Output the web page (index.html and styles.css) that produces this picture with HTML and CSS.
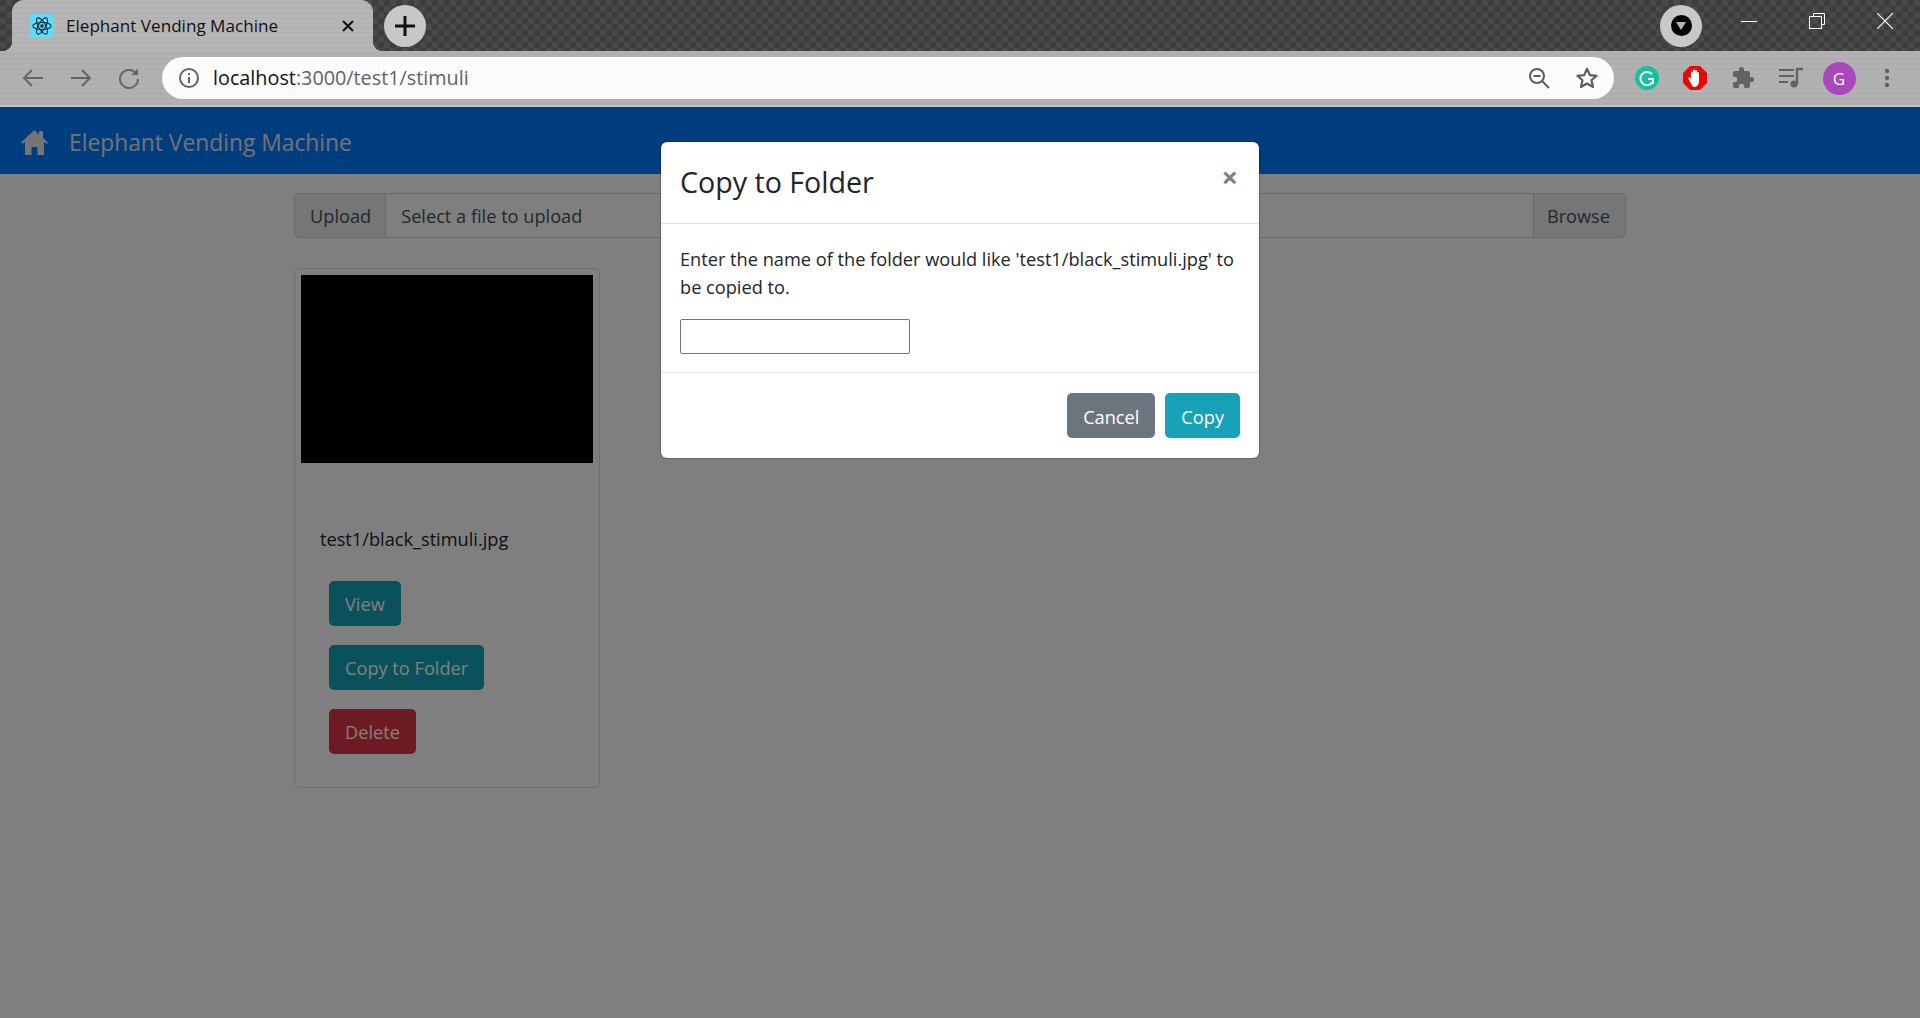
FILE: index.html
```html
<!DOCTYPE html>
<html lang="en">
<head>
<meta charset="UTF-8" />
<title>Elephant Vending Machine</title>
<link rel="stylesheet" href="styles.css">
</head>
<body>
<!-- Browser chrome -->
<div class="tabstrip">
  <div class="tab">
    <span class="favicon">
      <svg width="20" height="20" viewBox="0 0 24 24" fill="none" stroke="#10323f" stroke-width="1.3">
        <circle cx="12" cy="12" r="2.2" fill="#10323f" stroke="none"/>
        <ellipse cx="12" cy="12" rx="11" ry="4.3"/>
        <ellipse cx="12" cy="12" rx="11" ry="4.3" transform="rotate(60 12 12)"/>
        <ellipse cx="12" cy="12" rx="11" ry="4.3" transform="rotate(120 12 12)"/>
      </svg>
    </span>
    <span class="tab-title">Elephant Vending Machine</span>
    <svg class="tab-close" width="12" height="12" viewBox="0 0 12 12" stroke="#111" stroke-width="2"><path d="M1 1l10 10M11 1L1 11"/></svg>
  </div>
  <div class="newtab">
    <svg width="22" height="22" viewBox="0 0 22 22" stroke="#111" stroke-width="3"><path d="M11 1v20M1 11h20"/></svg>
  </div>
  <div class="strip-space"></div>
  <div class="newtab media-btn"><span class="media-dot"></span></div>
  <div class="winctl">
    <svg width="16" height="16" viewBox="0 0 16 16" stroke="#fff" stroke-width="1"><path d="M0 8.5h16"/></svg>
  </div>
  <div class="winctl">
    <svg width="16" height="16" viewBox="0 0 16 16" fill="none" stroke="#fff" stroke-width="1"><path d="M4.5 3V.5h11v11H13"/><rect x=".5" y="3.5" width="12" height="12"/></svg>
  </div>
  <div class="winctl">
    <svg width="16" height="16" viewBox="0 0 16 16" stroke="#fff" stroke-width="1.1"><path d="M0 0l16 16M16 0L0 16"/></svg>
  </div>
</div>

<div class="toolbar">
  <svg class="navicon" width="24" height="24" viewBox="0 0 24 24" fill="none" stroke="#62666b" stroke-width="2"><path d="M22 12H3M11 4l-8 8 8 8"/></svg>
  <svg class="navicon" width="24" height="24" viewBox="0 0 24 24" fill="none" stroke="#62666b" stroke-width="2"><path d="M2 12h19M13 4l8 8-8 8"/></svg>
  <svg class="navicon" width="24" height="24" viewBox="0 0 24 24" fill="none" stroke="#62666b" stroke-width="2"><path d="M19.5 8A9 9 0 1 0 21 13"/><path d="M21 2.5V9h-6.5z" fill="#62666b" stroke="none"/></svg>
  <div class="omnibox">
    <svg class="info-icon" width="22" height="22" viewBox="0 0 22 22" fill="none" stroke="#5f6368" stroke-width="2"><circle cx="11" cy="11" r="9"/><path d="M11 10v6M11 6v2"/></svg>
    <span class="url">localhost<span class="url-rest">:3000/test1/stimuli</span></span>
    <div class="omni-actions">
      <svg width="24" height="24" viewBox="0 0 24 24" fill="none" stroke="#5a5d60" stroke-width="2"><circle cx="10" cy="10" r="7"/><path d="M6.5 10h7M15 15l7 7"/></svg>
      <svg width="24" height="24" viewBox="0 0 24 24" fill="none" stroke="#5a5d60" stroke-width="2.2" stroke-linejoin="round"><path d="M12 2.8l2.8 6.3 6.8.7-5.1 4.5 1.5 6.7-6-3.5-6 3.5 1.5-6.7-5.1-4.5 6.8-.7z"/></svg>
    </div>
  </div>
  <div class="extensions">
    <svg width="24" height="24" viewBox="0 0 24 24" fill="none"><circle cx="12" cy="12" r="12" fill="#15c39a"/><path d="M17 8.2A6.6 6.6 0 1 0 17.6 16M13 13h5v5" stroke="#fff" stroke-width="2"/></svg>
    <svg width="24" height="24" viewBox="0 0 24 24"><path d="M7 0h10l7 7v10l-7 7H7l-7-7V7z" fill="#e80a0a"/><path d="M8 13V6.5a1 1 0 0 1 2 0V11V4.500a1 1 0 0 1 2 0V11V5a1 1 0 0 1 2 0v6V7a1 1 0 0 1 2 0v8c0 3-2 6-4.500 6S9 19 7.500 16.500L5.500 13c-.7-1.200 1-2 1.700-1z" fill="#fff"/></svg>
    <svg width="24" height="24" viewBox="0 0 24 24" fill="#5f6368"><path d="M20.500 11H19V7a2 2 0 0 0-2-2h-4V3.500a2.500 2.500 0 0 0-5 0V5H4a2 2 0 0 0-2 2v3.800h1.500a2.700 2.700 0 0 1 0 5.400H2V20a2 2 0 0 0 2 2h3.800v-1.500a2.700 2.700 0 0 1 5.400 0V22H17a2 2 0 0 0 2-2v-4h1.500a2.500 2.500 0 0 0 0-5z"/></svg>
    <svg width="24" height="24" viewBox="0 0 24 24" fill="none" stroke="#5f6368" stroke-width="2"><path d="M0 4h15M0 10h15M0 16h9"/><path d="M18 18V3h6" stroke-width="2.400"/><circle cx="15" cy="18" r="3.600" fill="#5f6368" stroke="none"/></svg>
    <span class="avatar">G</span>
    <svg width="24" height="24" viewBox="0 0 24 24" fill="#5f6368"><circle cx="12" cy="5" r="2.200"/><circle cx="12" cy="12" r="2.200"/><circle cx="12" cy="19" r="2.200"/></svg>
  </div>
</div>

<!-- App -->
<div class="app">
  <nav class="navbar">
    <svg class="home-icon" width="27" height="26" viewBox="0 0 27 26"><path d="M13.500 1L0 13.500l1.500 1.500L4 12.800V26h6.500v-8h6v8H23V12.800L25.500 15l1.500-1.500L22 9V2h-4v3.400z"/></svg>
    <span class="navbar-brand">Elephant Vending Machine</span>
  </nav>

  <main class="content">
    <div class="file-input">
      <span class="addon addon-left">Upload</span>
      <span class="file-label">Select a file to upload</span>
      <span class="addon addon-right">Browse</span>
    </div>

    <div class="card">
      <div class="card-img"></div>
      <p class="card-name">test1/black_stimuli.jpg</p>
      <div class="card-actions">
        <button class="btn btn-info">View</button>
        <button class="btn btn-info">Copy to Folder</button>
        <button class="btn btn-danger">Delete</button>
      </div>
    </div>
  </main>

  <!-- Modal sits over the app -->
  <div class="backdrop">
    <div class="modal">
      <div class="modal-header">
        <h5 class="modal-title">Copy to Folder</h5>
        <span class="modal-close">&times;</span>
      </div>
      <div class="modal-body">
        <p class="modal-text">Enter the name of the folder would like 'test1/black_stimuli.jpg' to be copied to.</p>
        <input class="modal-input" type="text" />
      </div>
      <div class="modal-footer">
        <button class="btn btn-secondary">Cancel</button>
        <button class="btn btn-info">Copy</button>
      </div>
    </div>
  </div>
</div>
</body>
</html>
```

FILE: styles.css
```css
* {
  box-sizing: border-box;
}
html, body {
  height: 100%;
}
body {
  margin: 0;
  background: #fff;
  font-family: "Open Sans", "Noto Sans", sans-serif;
  font-size: 18.2px;
  line-height: 28.8px;
  color: #212529;
  display: flex;
  flex-direction: column;
  overflow: hidden;
}

/* Tab strip */
.tabstrip {
  height: 51px;
  display: flex;
  align-items: center;
  padding: 0 1px 0 12px;
  background-color: #454545;
  background-image:
    conic-gradient(#4a4a4a 25%, #3e3e3e 0 50%, #4a4a4a 0 75%, #3e3e3e 0);
  background-size: 12px 12px;
}
.tab {
  position: relative;
  width: 361px;
  height: 51px;
  display: flex;
  align-items: center;
  padding: 1px 19px 0 18px;
  border-radius: 12px 12px 0 0;
  background: repeating-linear-gradient(180deg, #b7b7b7 0 2px, #b0b0b0 2px 3px, #b4b4b4 3px 5px);
}
.tab::before, .tab::after {
  content: "";
  position: absolute;
  bottom: 0;
  width: 10px;
  height: 10px;
}
.tab::before {
  left: -10px;
  background: radial-gradient(circle at 0 0, transparent 10px, #b4b4b4 10.5px);
}
.tab::after {
  right: -10px;
  background: radial-gradient(circle at 100% 0, transparent 10px, #b4b4b4 10.5px);
}
.favicon {
  width: 24px;
  height: 24px;
  border-radius: 3px;
  background: #61dafb;
  display: flex;
  align-items: center;
  justify-content: center;
}
.tab-title {
  margin-left: 12px;
  flex: 1;
  font-size: 17.1px;
  color: #111;
}
.newtab {
  width: 42px;
  height: 42px;
  margin-left: 11px;
  border-radius: 50%;
  background: #c8c8c8;
  display: flex;
  align-items: center;
  justify-content: center;
}
.strip-space {
  flex: 1;
}
.media-btn {
  margin-right: 13px;
}
.media-dot {
  width: 21px;
  height: 21px;
  border-radius: 50%;
  background: #000;
  position: relative;
}
.media-dot::after {
  content: "";
  position: absolute;
  left: 5.5px;
  top: 7px;
  border-left: 5px solid transparent;
  border-right: 5px solid transparent;
  border-top: 8px solid #b5b5b5;
}
.winctl {
  width: 68px;
  height: 51px;
  padding-top: 13px;
  display: flex;
  align-items: flex-start;
  justify-content: center;
}

/* Toolbar */
.toolbar {
  height: 56px;
  display: flex;
  align-items: center;
  padding: 4px 0;
  background: repeating-linear-gradient(180deg, #b2b2b2 0 2px, #acacac 2px 3px, #b0b0b0 3px 5px);
  border-bottom: 2px solid #c4c4c4;
}
.navicon {
  margin-left: 21px;
  margin-right: 3px;
}
.omnibox {
  width: 1452px;
  height: 42px;
  margin-left: 18px;
  border-radius: 21px;
  background: #fcfcfc;
  display: flex;
  align-items: center;
  padding: 0 15px 0 16px;
}
.url {
  margin-left: 13px;
  font-size: 19.8px;
  color: #111;
  flex: 1;
}
.url-rest {
  color: #5f6368;
}
.omni-actions {
  display: flex;
  gap: 24px;
}
.extensions {
  display: grid;
  grid-template-columns: repeat(6, 48px);
  justify-items: center;
  align-items: center;
  padding-left: 9px;
}
.avatar {
  width: 33px;
  height: 33px;
  border-radius: 50%;
  background: #ab47bc;
  color: #fff;
  font-size: 17px;
  line-height: 33px;
  text-align: center;
}

/* App */
.app {
  position: relative;
  flex: 1;
}
.navbar {
  height: 67px;
  background: #007bff;
  display: flex;
  align-items: center;
  padding-left: 21px;
}
.navbar-brand {
  margin-left: 21px;
  padding-top: 5px;
  font-size: 22.8px;
  color: #e6e6e6;
}
.home-icon {
  margin-top: 2px;
  fill: #ebebeb;
}
.content {
  width: 1332px;
  margin: 19px auto 0;
}
.file-input {
  height: 45px;
  display: flex;
  border: 1px solid #ced4da;
  border-radius: 5px;
  color: #495057;
  line-height: 45px;
}
.addon {
  background: #e9ecef;
  padding: 0 15px;
}
.addon-left {
  border-right: 1px solid #ced4da;
  padding-right: 14px;
}
.addon-right {
  border-left: 1px solid #ced4da;
  padding-left: 13px;
}
.file-label {
  flex: 1;
  padding: 0 15px;
}
.card {
  width: 306px;
  margin-top: 30px;
  border: 1px solid rgba(0, 0, 0, .125);
  border-radius: 5px;
  padding: 6px 6px 33px;
}
.card-img {
  height: 188px;
  background: #000;
}
.card-name {
  margin: 62px 0 27px 19px;
}
.card-actions {
  display: flex;
  flex-direction: column;
  align-items: flex-start;
  gap: 19px;
  padding-left: 28px;
}
.btn {
  height: 45px;
  padding: 2px 15px 0;
  border: 1px solid transparent;
  border-radius: 5px;
  font-family: inherit;
  font-size: 18.2px;
  color: #fff;
}
.btn-info {
  background: #17a2b8;
}
.btn-danger {
  background: #dc3545;
}
.btn-secondary {
  background: #6c757d;
}

/* Modal */
.backdrop {
  position: absolute;
  top: 0;
  right: 0;
  bottom: 0;
  left: 0;
  background: rgba(0, 0, 0, .5);
  padding-top: 35px;
}
.modal {
  width: 598px;
  margin: 0 auto;
  background: #fff;
  border-radius: 6px;
  box-shadow: 0 0 0 1px rgba(0, 0, 0, .2);
}
.modal-header {
  height: 82px;
  display: flex;
  justify-content: space-between;
  padding: 21px 21px 0 19px;
  border-bottom: 1px solid #dee2e6;
}
.modal-title {
  margin: 0;
  font-size: 28.6px;
  line-height: 38px;
  font-weight: 500;
}
.modal-close {
  padding-top: 0;
  font-size: 29px;
  line-height: 28px;
  font-weight: 700;
  color: #808080;
}
.modal-body {
  height: 149px;
  padding: 21px 19px 0;
  border-bottom: 1px solid #dee2e6;
}
.modal-text {
  margin: 0 0 18px;
  line-height: 28px;
}
.modal-input {
  display: block;
  width: 230px;
  height: 35px;
  border: 1px solid #767676;
  border-radius: 2px;
}
.modal-footer {
  height: 85px;
  display: flex;
  justify-content: flex-end;
  gap: 10px;
  padding: 20px 19px 0;
}
```
